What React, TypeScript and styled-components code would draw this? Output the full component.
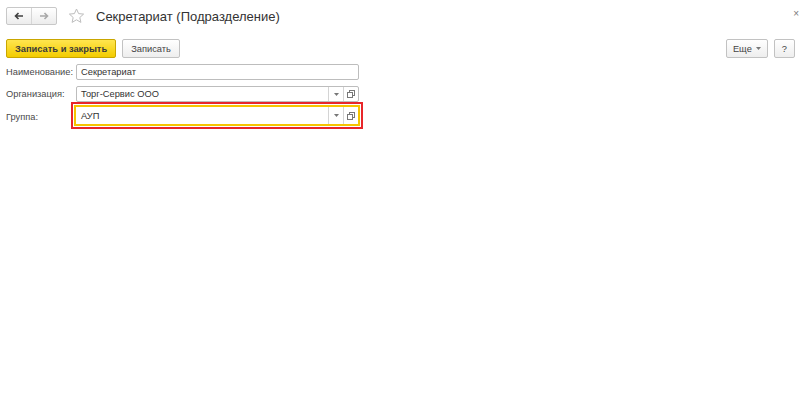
import React from "react";
import styled, { createGlobalStyle } from "styled-components";

const GlobalStyle = createGlobalStyle`
  html, body {
    margin: 0;
    padding: 0;
    background: #ffffff;
  }
  body {
    font-family: "Liberation Sans", Arial, sans-serif;
    color: #333333;
  }
`;

const Page = styled.div`
  width: 800px;
  height: 405px;
  background: #ffffff;
  overflow: hidden;
`;

const Header = styled.div`
  display: flex;
  align-items: center;
  height: 18px;
  padding: 7px 1px 0 6px;
`;

const NavGroup = styled.div`
  display: flex;
  height: 16px;
  border: 1px solid #c8c8c8;
  border-radius: 2px;
  background: linear-gradient(#ffffff, #ececec);
`;

const NavButton = styled.div<{ $disabled?: boolean }>`
  width: 24px;
  display: flex;
  align-items: center;
  justify-content: center;
  color: ${(p) => (p.$disabled ? "#a8a8a8" : "#404040")};

  & + & {
    border-left: 1px solid #d6d6d6;
  }
`;

const Star = styled.div`
  margin-left: 11px;
  display: flex;
  align-items: center;
`;

const Title = styled.div`
  margin-left: 11px;
  font-size: 13px;
  color: #333333;
  white-space: nowrap;
`;

const Close = styled.div`
  margin-left: auto;
  margin-top: -5px;
  font-size: 10px;
  color: #7a7a7a;
`;

const CommandBar = styled.div`
  display: flex;
  align-items: center;
  padding: 14px 5px 0 6px;
  gap: 6px;
`;

const Button = styled.div<{ $primary?: boolean; $pad?: number }>`
  height: 17px;
  padding: 0 ${(p) => p.$pad ?? 8}px;
  display: flex;
  align-items: center;
  gap: 4px;
  font-size: 9.3px;
  font-weight: ${(p) => (p.$primary ? "bold" : "normal")};
  color: ${(p) => (p.$primary ? "#3a3a3a" : "#444444")};
  border: 1px solid ${(p) => (p.$primary ? "#c9a600" : "#c2c2c2")};
  border-radius: 2px;
  background: ${(p) =>
    p.$primary
      ? "linear-gradient(#ffe54f, #f3cc00)"
      : "linear-gradient(#ffffff, #eeeeee)"};
  white-space: nowrap;
`;

const Spacer = styled.div`
  flex: 1;
`;

const Form = styled.div`
  display: grid;
  grid-template-columns: 70px 283px;
  row-gap: 6px;
  align-items: center;
  padding: 6px 0 0 6px;
`;

const Label = styled.div`
  font-size: 9.3px;
  color: #4a4a4a;
  white-space: nowrap;
`;

const Field = styled.div<{ $focused?: boolean }>`
  display: flex;
  height: ${(p) => (p.$focused ? "17px" : "14px")};
  border: 1px solid ${(p) => (p.$focused ? "#f5c400" : "#bdbdbd")};
  border-radius: ${(p) => (p.$focused ? "0" : "2px")};
  background: #ffffff;
  box-shadow: ${(p) => (p.$focused ? "0 0 0 1px #f5c400" : "none")};
  outline: ${(p) => (p.$focused ? "2px solid #e8262a" : "none")};
  outline-offset: 2px;
  margin: ${(p) => (p.$focused ? "-2px 0 0 -1px" : "0")};
`;

const FieldText = styled.div<{ $focused?: boolean }>`
  flex: 1;
  display: flex;
  align-items: center;
  font-size: 9.3px;
  padding-left: ${(p) => (p.$focused ? "5px" : "4px")};
  color: #333333;
  white-space: nowrap;
`;

const FieldButton = styled.div`
  width: 14px;
  border-left: 1px solid #d4d4d4;
  display: flex;
  align-items: center;
  justify-content: center;
  color: #666666;
`;

function ArrowIcon({ dir }: { dir: "left" | "right" }) {
  return (
    <svg width="10" height="8" viewBox="0 0 10 8">
      {dir === "left" ? (
        <path d="M9 4H2M4.5 1L1.5 4l3 3" stroke="currentColor" strokeWidth="1.6" fill="none" />
      ) : (
        <path d="M1 4h7M5.5 1l3 3-3 3" stroke="currentColor" strokeWidth="1.6" fill="none" />
      )}
    </svg>
  );
}

function StarIcon() {
  return (
    <svg width="17" height="16" viewBox="0 0 17 16">
      <path
        d="M8.5 1l2.1 4.6 5 .5-3.8 3.4 1.1 4.9-4.4-2.6-4.4 2.6 1.1-4.9L1.4 6.1l5-.5z"
        fill="none"
        stroke="#bdbdbd"
        strokeWidth="1"
        strokeLinejoin="round"
      />
    </svg>
  );
}

function DropIcon() {
  return (
    <svg width="5" height="3" viewBox="0 0 5 3">
      <path d="M0 0h5L2.5 3z" fill="#777777" />
    </svg>
  );
}

function OpenIcon() {
  return (
    <svg width="8" height="8" viewBox="0 0 8 8">
      <rect x="2.5" y="0.5" width="5" height="5" fill="#ffffff" stroke="#777777" />
      <rect x="0.5" y="2.5" width="5" height="5" fill="#ffffff" stroke="#777777" />
    </svg>
  );
}

function Input({ value, choice, focused }: { value: string; choice?: boolean; focused?: boolean }) {
  return (
    <Field $focused={focused}>
      <FieldText $focused={focused}>{value}</FieldText>
      {choice && (
        <>
          <FieldButton>
            <DropIcon />
          </FieldButton>
          <FieldButton>
            <OpenIcon />
          </FieldButton>
        </>
      )}
    </Field>
  );
}

export default function App() {
  return (
    <Page>
      <GlobalStyle />
      <Header>
        <NavGroup>
          <NavButton>
            <ArrowIcon dir="left" />
          </NavButton>
          <NavButton $disabled>
            <ArrowIcon dir="right" />
          </NavButton>
        </NavGroup>
        <Star>
          <StarIcon />
        </Star>
        <Title>Секретариат (Подразделение)</Title>
        <Close>×</Close>
      </Header>

      <CommandBar>
        <Button $primary>Записать и закрыть</Button>
        <Button>Записать</Button>
        <Spacer />
        <Button $pad={6}>
          Еще <DropIcon />
        </Button>
        <Button $pad={7}>?</Button>
      </CommandBar>

      <Form>
        <Label>Наименование:</Label>
        <Input value="Секретариат" />
        <Label>Организация:</Label>
        <Input value="Торг-Сервис ООО" choice />
        <Label>Группа:</Label>
        <Input value="АУП" choice focused />
      </Form>
    </Page>
  );
}
